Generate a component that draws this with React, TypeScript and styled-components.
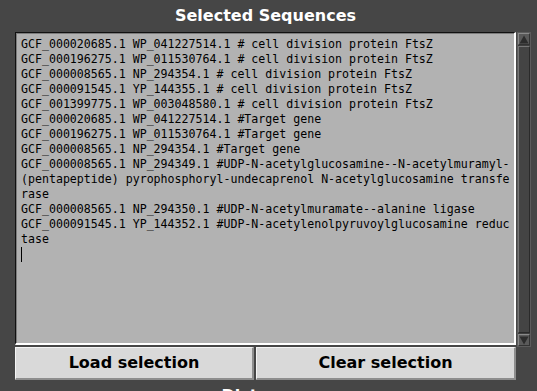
import React from "react";
import styled, { createGlobalStyle } from "styled-components";

const Global = createGlobalStyle`
  html, body { margin: 0; padding: 0; background: #464646; overflow: hidden; }
  body { width: 537px; height: 391px; }
`;

const Page = styled.div`
  width: 537px;
  height: 391px;
  padding-left: 15px;
  box-sizing: border-box;
  background: #464646;
  overflow: hidden;
  font-family: "DejaVu Sans", sans-serif;
`;

const Heading = styled.div<{ $h: number; $lh: number }>`
  width: 501px;
  height: ${(p) => p.$h}px;
  line-height: ${(p) => p.$lh}px;
  text-align: center;
  color: #ffffff;
  font-weight: bold;
  font-size: 16px;
  white-space: nowrap;
`;

const EditorRow = styled.div`
  display: flex;
  align-items: flex-start;
  height: 315px;
`;

const TextBox = styled.div`
  width: 501px;
  height: 313px;
  box-sizing: border-box;
  background: #b2b2b2;
  border-top: 1px solid #111111;
  border-left: 1px solid #111111;
  border-right: 2px solid #ffffff;
  border-bottom: 2px solid #ffffff;
  box-shadow: inset 1px 1px 0 #7c7c7c;
  padding: 4px 0 0 5px;
  font-family: "DejaVu Sans Mono", monospace;
  font-size: 11.6px;
  line-height: 15px;
  color: #000000;
  overflow: hidden;
`;

const Line = styled.div`
  white-space: pre;
  height: 15px;
`;

const Caret = styled.div`
  width: 0;
  height: 15px;
  border-left: 1px solid #000;
`;

const Scrollbar = styled.div`
  margin-left: 1px;
  width: 14px;
  height: 315px;
  box-sizing: border-box;
  background: #3e3e3e;
  border: 1px solid #5c5c5c;
  display: flex;
  flex-direction: column;
`;

const ArrowButton = styled.div`
  height: 12px;
  background: #5a5a5a;
  border-top: 1px solid #8a8a8a;
  border-left: 1px solid #8a8a8a;
  border-right: 1px solid #333;
  border-bottom: 1px solid #333;
  box-sizing: border-box;
  display: flex;
  align-items: center;
  justify-content: center;
`;

const Thumb = styled.div`
  flex: 1;
  margin: 1px 0;
  background: #444444;
  border-top: 1px solid #777;
  border-left: 1px solid #777;
  border-right: 1px solid #2a2a2a;
  border-bottom: 1px solid #2a2a2a;
`;

const ButtonRow = styled.div`
  display: flex;
  gap: 2px;
  width: 501px;
`;

const ActionButton = styled.button<{ $w: number }>`
  width: ${(p) => p.$w}px;
  height: 33px;
  box-sizing: border-box;
  margin: 0;
  padding: 0 0 1px 0;
  background: #d9d9d9;
  border-top: 1px solid #f4f4f4;
  border-left: 1px solid #f4f4f4;
  border-right: 2px solid #8e8e8e;
  border-bottom: 2px solid #8e8e8e;
  font-family: "DejaVu Sans", sans-serif;
  font-weight: bold;
  font-size: 16px;
  color: #000;
  text-align: center;
`;

const lines = [
  "GCF_000020685.1 WP_041227514.1 # cell division protein FtsZ",
  "GCF_000196275.1 WP_011530764.1 # cell division protein FtsZ",
  "GCF_000008565.1 NP_294354.1 # cell division protein FtsZ",
  "GCF_000091545.1 YP_144355.1 # cell division protein FtsZ",
  "GCF_001399775.1 WP_003048580.1 # cell division protein FtsZ",
  "GCF_000020685.1 WP_041227514.1 #Target gene",
  "GCF_000196275.1 WP_011530764.1 #Target gene",
  "GCF_000008565.1 NP_294354.1 #Target gene",
  "GCF_000008565.1 NP_294349.1 #UDP-N-acetylglucosamine--N-acetylmuramyl-",
  "(pentapeptide) pyrophosphoryl-undecaprenol N-acetylglucosamine transfe",
  "rase",
  "GCF_000008565.1 NP_294350.1 #UDP-N-acetylmuramate--alanine ligase",
  "GCF_000091545.1 YP_144352.1 #UDP-N-acetylenolpyruvoylglucosamine reduc",
  "tase",
];

const Arrow = ({ up }: { up: boolean }) => (
  <svg width="10" height="9" viewBox="0 0 10 9">
    <polygon
      points={up ? "5,0.5 9.5,8.5 0.5,8.5" : "0.5,0.5 9.5,0.5 5,8.5"}
      fill="#2c2c2c"
    />
  </svg>
);

export default function App() {
  return (
    <Page>
      <Global />
      <Heading $h={32} $lh={31}>Selected Sequences</Heading>
      <EditorRow>
        <TextBox>
          {lines.map((l, i) => (
            <Line key={i}>{l}</Line>
          ))}
          <Caret />
        </TextBox>
        <Scrollbar>
          <ArrowButton>
            <Arrow up />
          </ArrowButton>
          <Thumb />
          <ArrowButton>
            <Arrow up={false} />
          </ArrowButton>
        </Scrollbar>
      </EditorRow>
      <ButtonRow>
        <ActionButton $w={239}>Load selection</ActionButton>
        <ActionButton $w={260}>Clear selection</ActionButton>
      </ButtonRow>
      <Heading $h={30} $lh={32}>Distances</Heading>
    </Page>
  );
}
